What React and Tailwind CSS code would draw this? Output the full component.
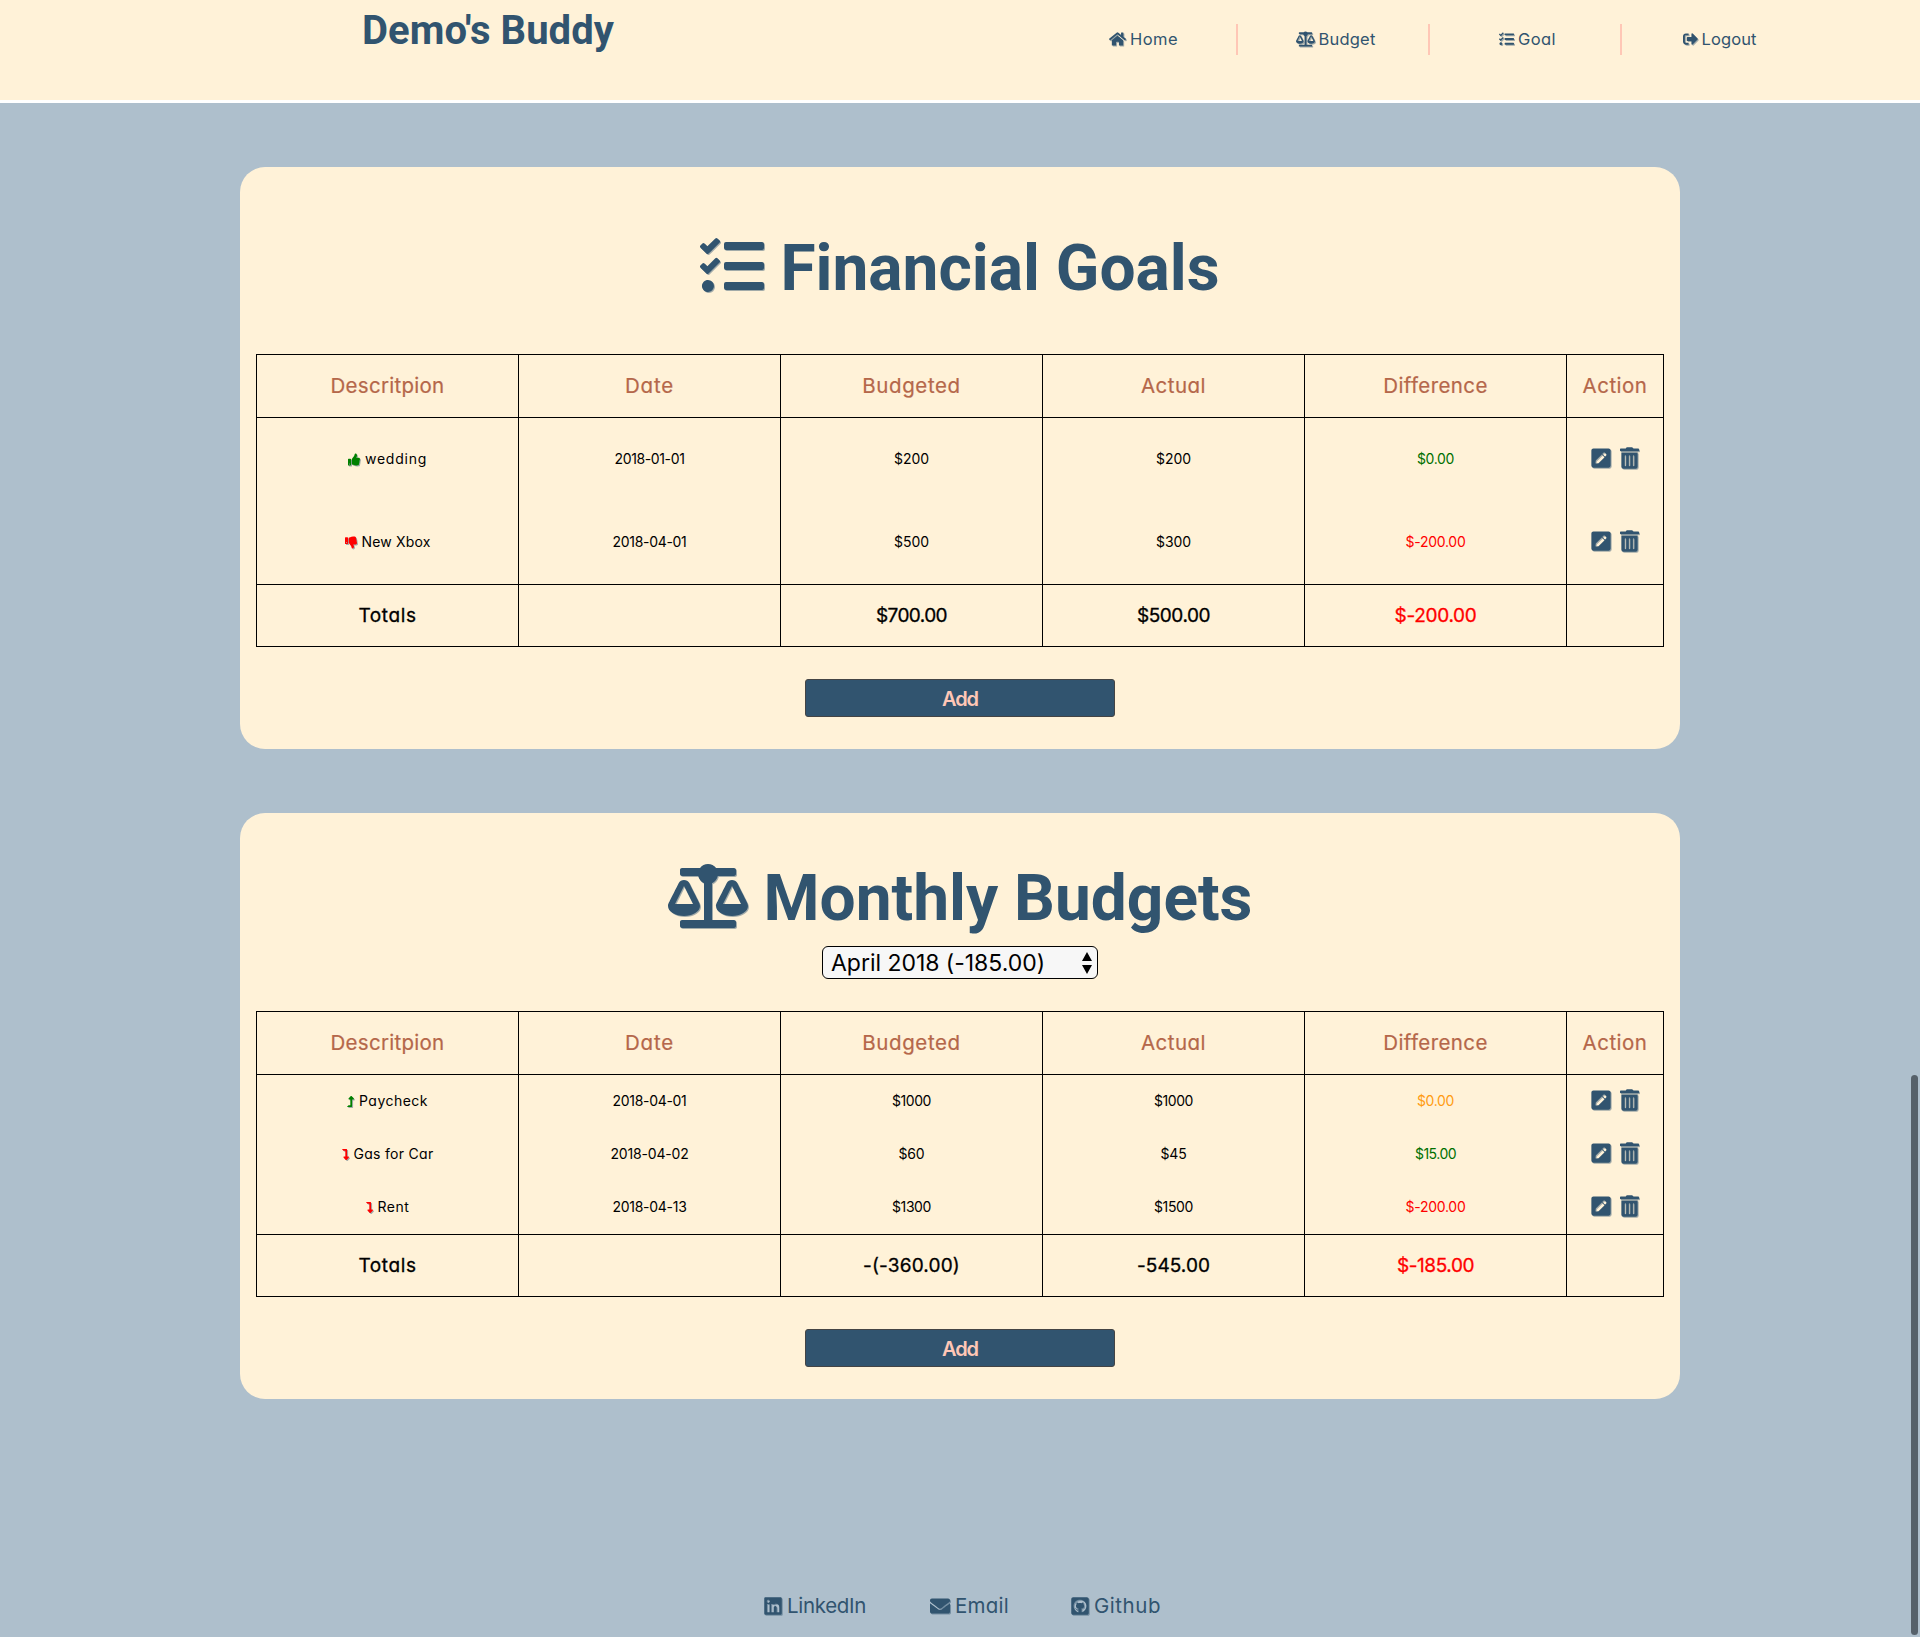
import { useLayoutEffect, useRef } from "react";
import {
  FaHome, FaBalanceScale, FaTasks, FaSignOutAlt, FaThumbsUp, FaThumbsDown,
  FaPenSquare, FaTrashAlt, FaLevelUpAlt, FaLevelDownAlt, FaLinkedin,
  FaEnvelope, FaGithubSquare,
} from "react-icons/fa";

const shadow = "shrink-0 drop-shadow-[1px_1px_0_rgba(49,84,112,0.45)]";

// Text tracked so that its line is w pixels wide.
function Fit({ w, className = "", children }) {
  const ref = useRef(null);
  useLayoutEffect(() => {
    const el = ref.current;
    el.style.letterSpacing = "0px";
    const natural = el.getBoundingClientRect().width;
    el.style.letterSpacing = `${(w - natural) / children.length}px`;
  }, [w, children]);
  return <span ref={ref} className={`inline-block whitespace-nowrap ${className}`}>{children}</span>;
}

const nav = [
  { label: "Home", w: 48, Icon: FaHome, size: "w-[17px] h-4" },
  { label: "Budget", w: 57, Icon: FaBalanceScale, size: "w-[19px] h-4" },
  { label: "Goal", w: 38, Icon: FaTasks, size: "w-[15px] h-4" },
  { label: "Logout", w: 55, Icon: FaSignOutAlt, size: "w-[15px] h-4" },
];

const columns = [["Descritpion", 114], ["Date", 49], ["Budgeted", 98.5], ["Actual", 65], ["Difference", 104.5], ["Action", 65]];

const thumb = "w-[12px] h-[13px] mt-[2px]";
const level = "w-[7px] h-[13px] mt-[2px]";

const goals = [
  { h: "h-[83px]", Icon: FaThumbsUp, size: thumb, tone: "text-[#008000]", diffTone: "text-[#007000]",
    cells: [["wedding", 62], ["2018-01-01", 70], ["$200", 35], ["$200", 35], ["$0.00", 37]] },
  { h: "h-[84px] border-b", Icon: FaThumbsDown, size: thumb, tone: "text-[#ff0000]", diffTone: "text-[#ff0000]",
    cells: [["New Xbox", 69], ["2018-04-01", 74], ["$500", 35], ["$300", 35], ["$-200.00", 60]] },
];

const budgets = [
  { h: "h-[53px]", Icon: FaLevelUpAlt, size: level, tone: "text-[#008000]", diffTone: "text-[#ff9c12]",
    cells: [["Paycheck", 69], ["2018-04-01", 74], ["$1000", 39], ["$1000", 39], ["$0.00", 37]] },
  { h: "h-[53px]", Icon: FaLevelDownAlt, size: level, tone: "text-[#ff0000]", diffTone: "text-[#007000]",
    cells: [["Gas for Car", 80], ["2018-04-02", 78], ["$60", 26], ["$45", 26], ["$15.00", 41]] },
  { h: "h-[54px] border-b", Icon: FaLevelDownAlt, size: level, tone: "text-[#ff0000]", diffTone: "text-[#ff0000]",
    cells: [["Rent", 32], ["2018-04-13", 74], ["$1300", 39], ["$1500", 39], ["$-200.00", 60]] },
];

const rowGrid = "grid grid-cols-[262px_262px_262px_262px_262px_97px] border-black";
const cell = "flex items-center justify-center border-r border-black";

function Table({ rows, totals, className }) {
  return (
    <div className={`mx-4 border-l border-t border-black leading-none ${className}`}>
      <div className={`${rowGrid} h-[63px] border-b text-[20.5px] text-[#b5674a] [-webkit-text-stroke:0.2px]`}>
        {columns.map(([label, w]) => (
          <div key={label} className={cell}><Fit w={w}>{label}</Fit></div>
        ))}
      </div>
      {rows.map(({ h, Icon, size, tone, diffTone, cells }) => (
        <div key={cells[0][0]} className={`${rowGrid} ${h} text-[14px] text-black`}>
          {cells.map(([text, w], i) => (
            <div key={i} className={`${cell} gap-[5px] pb-[2px] ${i === 4 ? diffTone : ""}`}>
              {i === 0 && <Icon className={`${shadow} ${size} ${tone}`} />}
              <Fit w={w}>{text}</Fit>
            </div>
          ))}
          <div className={`${cell} gap-[9px] pr-[1px] pb-[3px] text-[#31546f]`}>
            <FaPenSquare className={`${shadow} h-[22px] w-5`} />
            <FaTrashAlt className={`${shadow} h-[22px] w-[19px]`} />
          </div>
        </div>
      ))}
      <div className={`${rowGrid} h-[62px] border-b text-[19px] text-black [-webkit-text-stroke:0.3px]`}>
        {totals.map(([text, w], i) => (
          <div key={i} className={`${cell} ${i === 4 ? "text-[#ff0000]" : ""}`}>
            {text && <Fit w={w}>{text}</Fit>}
          </div>
        ))}
      </div>
    </div>
  );
}

function AddButton() {
  return (
    <button className="mx-auto mt-8 flex h-[38px] w-[310px] items-center justify-center rounded-[3px] border border-[#444] bg-[#31546f] pt-[2px] text-[20px] leading-none font-semibold text-[#ffc7b6]">
      <Fit w={36}>Add</Fit>
    </button>
  );
}

function Title({ Icon, size, className, children }) {
  return (
    <h1 className={`flex h-16 items-center justify-center gap-4 font-[Roboto,sans-serif] text-[64px] leading-none font-bold ${className}`}>
      <Icon className={`${shadow} ${size} mb-1`} />
      <span className="pt-[2px]">{children}</span>
    </h1>
  );
}

export default function App() {
  return (
    <div className="flex h-[1637px] w-[1920px] flex-col overflow-hidden bg-[#aebfcc] font-[Inter,sans-serif] text-[#31546f] [font-feature-settings:'cv11']">
      <header className="flex h-[103px] shrink-0 border-b-[3px] border-white bg-[#fff2d8]">
        <div className="ml-[362px] w-[684px] pt-[11px] font-[Roboto,sans-serif] text-[40px] leading-[40px] font-bold">
          <Fit w={252}>Demo's Buddy</Fit>
        </div>
        <nav className="mt-6 flex h-[31px] text-[16.5px] leading-none">
          {nav.map(({ label, w, Icon, size }) => (
            <a key={label} className="flex w-48 items-center justify-center gap-1 border-r-2 border-[#ffc7b6] pb-[1px] pl-[5px] last:border-transparent">
              <Icon className={`${shadow} ${size}`} />
              <Fit w={w}>{label}</Fit>
            </a>
          ))}
        </nav>
      </header>

      <main className="mx-auto flex w-[1440px] flex-col gap-16 pt-16">
        <section className="rounded-[25px] bg-[#fff2d8] pb-8">
          <Title Icon={FaTasks} size="h-16 w-16" className="mt-[69px]">Financial Goals</Title>
          <Table
            rows={goals}
            className="mt-[54px]"
            totals={[["Totals", 58], ["", 0], ["$700.00", 71], ["$500.00", 73], ["$-200.00", 82], ["", 0]]}
          />
          <AddButton />
        </section>

        <section className="rounded-[25px] bg-[#fff2d8] pb-8">
          <Title Icon={FaBalanceScale} size="h-16 w-20" className="mt-[53px]">Monthly Budgets</Title>
          <div className="mx-auto mt-4 flex h-[33px] w-[276px] items-center justify-between rounded-[6px] border border-black bg-[#f7f7f7] pr-[5px] pl-[8px] text-[23px] leading-none text-black">
            <Fit w={214} className="pt-[1px]">April 2018 (-185.00)</Fit>
            <svg viewBox="0 0 10 22" className="h-[22px] w-[10px]">
              <path d="M5 0 10 9H0zM5 22 0 13h10z" fill="currentColor" />
            </svg>
          </div>
          <Table
            rows={budgets}
            className="mt-8"
            totals={[["Totals", 58], ["", 0], ["-(-360.00)", 97], ["-545.00", 73], ["$-185.00", 77], ["", 0]]}
          />
          <AddButton />
        </section>
      </main>

      <footer className="mt-[196px] ml-[764px] flex h-[22px] items-center text-[20.5px] leading-none">
        <a className="flex w-[166px] items-center gap-[5px]">
          <FaLinkedin className={`${shadow} h-5 w-[18px]`} /><Fit w={79}>LinkedIn</Fit>
        </a>
        <a className="flex w-[141px] items-center gap-[5px]">
          <FaEnvelope className={`${shadow} h-5 w-5`} /><Fit w={54}>Email</Fit>
        </a>
        <a className="flex items-center gap-[5px]">
          <FaGithubSquare className={`${shadow} h-5 w-[18px]`} /><Fit w={67}>Github</Fit>
        </a>
      </footer>

      <div className="fixed top-[1075px] right-[2px] h-[560px] w-[7px] rounded-full bg-[#56616a]" />
    </div>
  );
}
